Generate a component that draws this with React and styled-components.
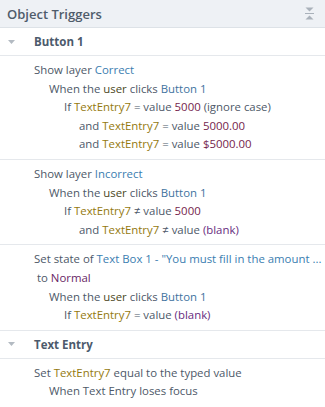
import React from "react"
import styled, { createGlobalStyle } from "styled-components"

const Global = createGlobalStyle`
    body{
        margin:0;
        background:#ffffff;
        font-family: "Open Sans", "Noto Sans", sans-serif;
    }
`;

const C = {
    text: "#4d5868",
    layer: "#3a7db0",
    obj: "#3f73a0",
    user: "#4a4722",
    variable: "#94790e",
    value: "#741d4c",
    blank: "#672c7e",
    state: "#6a1f66",
};

const groups = [
    {
        title: "Button 1",
        triggers: [
            [
                [0, [["Show layer "], ["Correct", "layer"]]],
                [1, [["When the "], ["user", "user"], [" clicks "], ["Button 1", "obj"]]],
                [2, [["If "], ["TextEntry7", "variable"], [" = value "], ["5000", "value"], [" (ignore case)"]]],
                [3, [["and "], ["TextEntry7", "variable"], [" = value "], ["5000.00", "value"]]],
                [3, [["and "], ["TextEntry7", "variable"], [" = value "], ["$5000.00", "value"]]],
            ],
            [
                [0, [["Show layer "], ["Incorrect", "layer"]]],
                [1, [["When the "], ["user", "user"], [" clicks "], ["Button 1", "obj"]]],
                [2, [["If "], ["TextEntry7", "variable"], [" \u2260 value "], ["5000", "value"]]],
                [3, [["and "], ["TextEntry7", "variable"], [" \u2260 value "], ["(blank)", "blank"]]],
            ],
            [
                [0, [["Set state of "], ["Text Box 1 - \"You must fill in the amount ...", "layer"]]],
                [0, [["\u00a0to "], ["Normal", "state"]]],
                [1, [["When the "], ["user", "user"], [" clicks "], ["Button 1", "obj"]]],
                [2, [["If "], ["TextEntry7", "variable"], [" = value "], ["(blank)", "blank"]]],
            ],
        ],
    },
    {
        title: "Text Entry",
        triggers: [
            [
                [0, [["Set "], ["TextEntry7", "variable"], [" equal to the typed value"]]],
                [1, [["When Text Entry loses focus"]]],
            ],
        ],
    },
];

const CollapseIcon = () => (
    <svg width="9" height="13" viewBox="0 0 9 13">
        <path d="M0.5 0.5 H8.5 L4.5 4.5 Z" fill="#a9b1ba" />
        <rect x="0" y="6" width="9" height="1" fill="#a9b1ba" />
        <path d="M0.5 12.5 H8.5 L4.5 8.5 Z" fill="#a9b1ba" />
    </svg>
);

const Caret = () => (
    <svg width="7" height="4" viewBox="0 0 7 4">
        <path d="M0 0 H7 L3.5 4 Z" fill="#b3bac2" />
    </svg>
);

const App = () => {
    return (
        <>
            <Global />
            <Panel>
                <Header>
                    <h2>Object Triggers</h2>
                    <CollapseIcon />
                </Header>
                {groups.map((g) => (
                    <React.Fragment key={g.title}>
                        <GroupRow>
                            <CaretBox><Caret /></CaretBox>
                            <span>{g.title}</span>
                        </GroupRow>
                        {g.triggers.map((t, i) => (
                            <Trigger key={i}>
                                {t.map(([level, parts], j) => (
                                    <Line key={j} level={level}>
                                        {parts.map(([txt, kind], k) =>
                                            kind ? <Tok key={k} kind={kind}>{txt}</Tok> : <span key={k}>{txt}</span>
                                        )}
                                    </Line>
                                ))}
                            </Trigger>
                        ))}
                    </React.Fragment>
                ))}
            </Panel>
        </>
    )
}

const Panel = styled.div`
    width:325px;
    height:407px;
    overflow:hidden;
    background:#fff;
    color:${C.text};
`;

const Header = styled.div`
    height:27px;
    display:flex;
    align-items:center;
    justify-content:space-between;
    padding:0 11px 0 7px;
    background:#eef1f5;
    border-bottom:1px solid #dde2e7;
    h2{
        margin:0;
        font-size:13px;
        font-weight:600;
        color:#4f5c6b;
    }
`;

const GroupRow = styled.div`
    height:27px;
    display:flex;
    align-items:center;
    border-bottom:1px solid #e5e8ec;
    font-size:11.5px;
    font-weight:700;
    color:#4c5a6c;
`;

const CaretBox = styled.div`
    width:34px;
    padding-left:8px;
    box-sizing:border-box;
    display:flex;
    align-items:center;
`;

const Trigger = styled.div`
    padding:5px 0 5px;
    border-bottom:1px solid #e5e8ec;
    &:last-child{ border-bottom:none; }
`;

const Line = styled.div`
    padding-left:${(p) => 34 + p.level * 15}px;
    font-size:11.4px;
    line-height:18.6px;
    white-space:nowrap;
    overflow:hidden;
`;

const Tok = styled.span`
    color:${(p) => C[p.kind]};
`;

export default App;
